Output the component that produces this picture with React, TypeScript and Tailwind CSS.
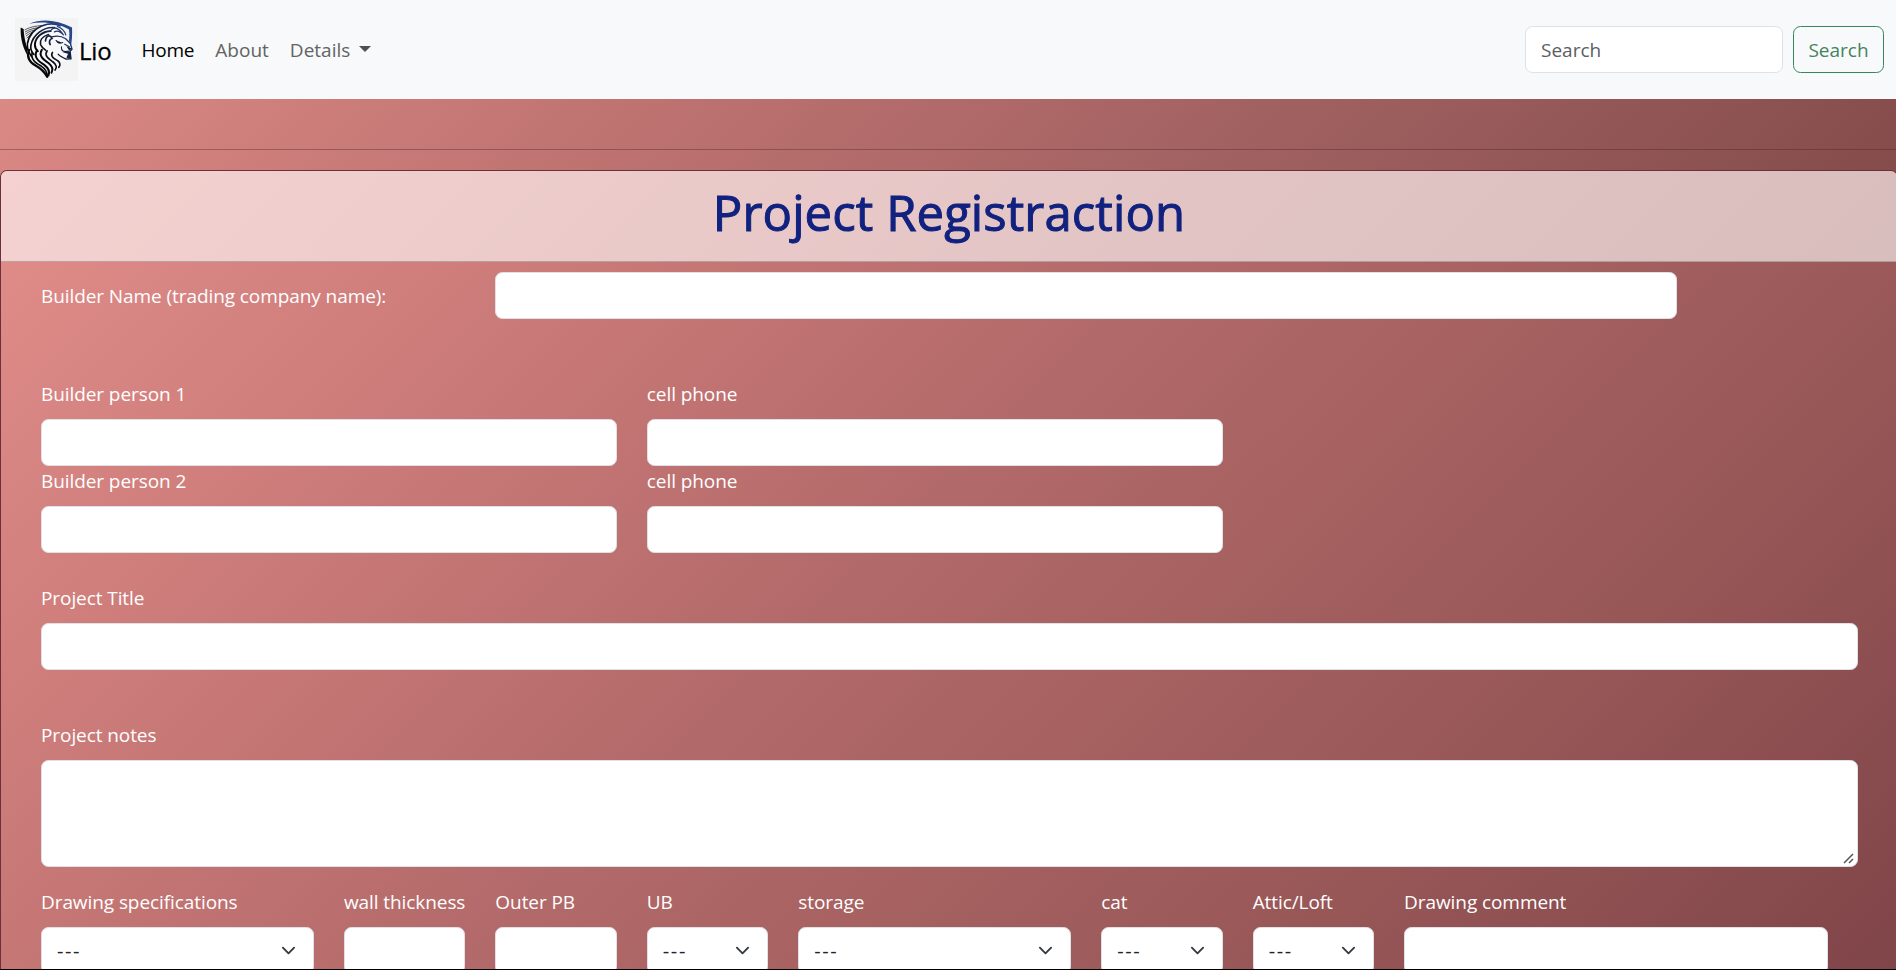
import type { ReactNode } from 'react';

const control = 'block w-full rounded-[7.5px] border border-[#dee2e6] bg-white text-[#212529] outline-none';

function Logo() {
  return (
    <svg viewBox="0 0 190 190" className="h-[63px] w-[63px] shrink-0 bg-[#f6f6f6]" fill="none" strokeLinecap="round" strokeLinejoin="round">
      <defs>
        <linearGradient id="ink" gradientUnits="userSpaceOnUse" x1="20" y1="170" x2="170" y2="20">
          <stop offset="0.4" stopColor="#060709" />
          <stop offset="0.65" stopColor="#15203d" />
          <stop offset="1" stopColor="#3558a8" />
        </linearGradient>
        <pattern id="checks" width="8" height="8" patternUnits="userSpaceOnUse">
          <path d="M0 0h4v4H0zM4 4h4v4H4z" fill="#f1f1f1" />
        </pattern>
      </defs>
      <path d="M0 0h190v190H0z" fill="url(#checks)" />
      <path d="M17 29L26 33C28 66 34 86 48 114L46 126C23 95 16 62 17 29Z" fill="#08090b" />
      <path d="M43 17C82 1 126 5 172 29C173 51 172 69 168 88L161 80C164 64 165 49 163 35C125 14 85 10 43 17Z" fill="#28468c" />
      <g stroke="#30363f" strokeWidth="2.5">
        <path d="M30 36C49 24 70 24 91 22M31 42C46 32 62 30 80 28M32 48C43 39 56 37 69 34M34 54C42 47 51 43 58 41M36 60C42 54 46 52 50 49" />
      </g>
      <path d="M137 23C110 12 82 20 65 33C44 48 35 72 38 92C33 110 40 132 56 142C76 153 86 160 97 179C118 164 132 152 142 133C150 134 158 130 164 124L169 123L166 100L172 94L167 77L152 50C150 38 146 28 137 23Z" fill="#f8f8f9" />
      <g stroke="url(#ink)">
        <path d="M137 23C110 12 82 20 65 33C44 48 34 72 38 93C41 104 46 110 50 116" strokeWidth="5" />
        <path d="M119 29C86 26 54 50 48 82C46 94 50 103 57 110" strokeWidth="5" />
        <path d="M108 39C80 40 61 60 60 80C60 90 64 96 69 100" strokeWidth="6" />
        <path d="M101 50C82 56 74 68 77 80C80 88 85 92 92 97" strokeWidth="5" />
        <path d="M42 96C35 118 45 134 62 143C78 152 88 160 97 177" strokeWidth="7" />
        <path d="M52 104C46 126 64 136 79 145C90 152 97 164 98 176" strokeWidth="5" />
        <path d="M66 98C54 120 74 132 89 142C101 151 105 162 101 173" strokeWidth="6" />
        <path d="M81 96C69 114 88 127 101 136C113 146 116 155 110 165" strokeWidth="6" />
        <path d="M97 99C86 114 103 124 114 132C126 141 127 150 121 157" strokeWidth="5" />
        <path d="M113 104C105 117 120 123 129 129C137 135 137 143 132 149" strokeWidth="5" />
        <path d="M92 69C94 52 106 49 112 62C104 64 102 72 106 80" strokeWidth="5" />
        <path d="M110 35C120 25 132 31 144 48M119 42C130 35 138 42 146 51M128 25C143 31 150 38 153 51" strokeWidth="4" />
        <path d="M111 57C124 53 138 53 152 62L167 77L172 94L166 100L169 123L154 124C145 120 136 116 130 109" strokeWidth="4" />
        <path d="M124 68C129 77 137 77 144 74M150 79L164 87M140 87C139 100 146 103 162 100" strokeWidth="3.5" />
      </g>
      <path d="M123 67L141 74L132 77ZM155 85L172 92L164 99ZM143 103L167 101L169 123L155 120L160 108Z" fill="#14203f" />
    </svg>
  );
}

function Chevron() {
  return (
    <svg viewBox="0 0 16 16" className="h-[15px] w-[15px]" fill="none" stroke="#343a40" strokeWidth="2" strokeLinecap="round" strokeLinejoin="round">
      <path d="m2 5 6 6 6-6" />
    </svg>
  );
}

function Label({ children }: { children: ReactNode }) {
  return <label className="mb-[10px] block h-[30px] text-[19px] leading-[31px] tracking-[-0.08px] whitespace-nowrap text-white">{children}</label>;
}

function TextField({ label, span }: { label: string; span: string }) {
  return (
    <div className={`${span} px-[15px]`}>
      <Label>{label}</Label>
      <input className={`${control} h-[47px] px-[15px]`} aria-label={label} />
    </div>
  );
}

function SelectField({ label, span }: { label: string; span: string }) {
  return (
    <div className={`${span} px-[15px]`}>
      <Label>{label}</Label>
      <button className={`${control} h-[47px]`}>
        <span className="flex items-center justify-between pr-[17px] pl-[15px] text-[20px]">
          <span className="tracking-[1.6px]">---</span>
          <Chevron />
        </span>
      </button>
    </div>
  );
}

export default function App() {
  return (
    <div className="flex h-[970px] w-full flex-col overflow-hidden bg-[linear-gradient(135deg,#df8c88_0px,#c07472_500px,#a06060_1000px,#844b4b_1480px,#7e4447_2030px)] font-['Open_Sans','Noto_Sans',sans-serif]">
      <nav className="flex h-[99px] shrink-0 items-center bg-[#f8f9fa] pr-3 pl-[15px]">
        <Logo />
        <span className="pt-[3px] pl-px text-[24px] tracking-[-0.2px] text-black [-webkit-text-stroke:0.3px_black]">Lio</span>
        <div className="ml-[30px] flex items-center gap-[21px] pt-px text-[19px] text-[#626364]">
          <a className="tracking-[-0.2px] text-black">Home</a>
          <a>About</a>
          <a className="flex items-center">
            Details
            <span className="mt-[-3px] ml-[9px] border-x-[6px] border-t-[6px] border-x-transparent border-t-[#4f5051]" />
          </a>
        </div>
        <div className="ml-auto flex gap-[10px] text-[19px]">
          <input className="h-[47px] w-[258px] rounded-[7.5px] border border-[#dee2e6] bg-white px-[15px] placeholder:text-[#5a5e63]" placeholder="Search" />
          <button className="h-[47px] w-[91px] rounded-[7.5px] border border-[#38865b] pt-px text-[#45835f]">Search</button>
        </div>
      </nav>

      <hr className="mt-[50px] mb-5 shrink-0 border-t border-[#3a1d23]/35" />

      <main className="h-[799px] w-[1898px] shrink-0 overflow-hidden rounded-t-[7px] border-x border-t border-[#6b3039] bg-[linear-gradient(135deg,#e28e8b_0px,#ca7a78_470px,#b26969_900px,#985757_1460px,#804549_1900px)]">
        <header className="h-[91px] border-b border-[#9a8082]/60 bg-[#fffcfc]/62 pt-[5px] text-center">
          <h1 className="text-[49px] leading-[72px] tracking-[0.1px] text-[#10217f] [-webkit-text-stroke:1px_#10217f]">Project Registraction</h1>
        </header>

        <form className="w-[1842.5px] pl-[25px]">
          <div className="grid grid-cols-12 pt-[10px]">
            <div className="col-span-3 px-[15px] pt-[9px]"><Label>Builder Name (trading company name):</Label></div>
            <div className="col-span-8 px-[15px]"><input className={`${control} h-[47px]`} aria-label="Builder name" /></div>
          </div>
          <div className="mt-[58px] grid grid-cols-12">
            <TextField label="Builder person 1" span="col-span-4" />
            <TextField label="cell phone" span="col-span-4" />
          </div>
          <div className="grid grid-cols-12">
            <TextField label="Builder person 2" span="col-span-4" />
            <TextField label="cell phone" span="col-span-4" />
          </div>
          <div className="mt-[30px] w-[1847px]">
            <TextField label="Project Title" span="w-full" />
          </div>
          <div className="mt-[50px] w-[1847px] px-[15px]">
            <Label>Project notes</Label>
            <div className="flex">
              <textarea className={`${control} h-[107px] resize-none`} aria-label="Project notes" />
              <svg viewBox="0 0 14 14" className="mr-[2px] mb-[2px] -ml-4 h-[14px] w-[14px] self-end" fill="none" stroke="#555" strokeWidth="1.5">
                <path d="M2 12 11 3M7 12 11 8" />
              </svg>
            </div>
          </div>
          <div className="mt-[20px] grid grid-cols-12">
            <SelectField label="Drawing specifications" span="col-span-2" />
            <TextField label="wall thickness" span="col-span-1" />
            <TextField label="Outer PB" span="col-span-1" />
            <SelectField label="UB" span="col-span-1" />
            <SelectField label="storage" span="col-span-2" />
            <SelectField label="cat" span="col-span-1" />
            <SelectField label="Attic/Loft" span="col-span-1" />
            <TextField label="Drawing comment" span="col-span-3" />
          </div>
        </form>
      </main>
      <div className="h-px shrink-0 bg-black" />
    </div>
  );
}
